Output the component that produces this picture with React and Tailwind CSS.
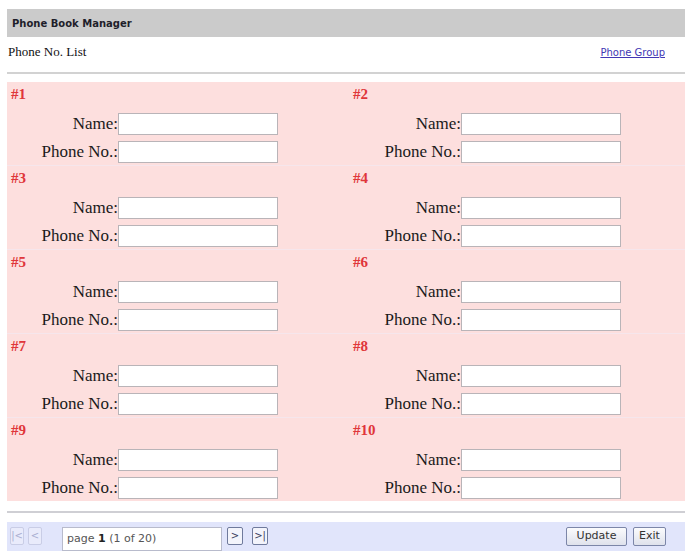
import React from "react";

const serif = { fontFamily: '"Liberation Serif", "Times New Roman", serif' };
const sans = { fontFamily: '"DejaVu Sans", Verdana, sans-serif' };

function Cell({ n, right }) {
  return (
    <div className={`h-[83px] bg-[#fddfde] ${right ? "pl-[3px]" : "pl-[4px]"} pt-[3px]`}>
      <div className="text-[15px] leading-[18px] font-bold text-[#e0363a]" style={serif}>
        #{n}
      </div>
      <div className="mt-[10px] flex items-center">
        <div className={`${right ? "w-[108px]" : "w-[107px]"} text-right text-[17px] leading-[18px] text-[#1a1a1a]`} style={serif}>
          Name:
        </div>
        <div className="w-[160px] h-[22px] border border-[#b9b4b8] bg-white" />
      </div>
      <div className="mt-[6px] flex items-center">
        <div className={`${right ? "w-[108px]" : "w-[107px]"} text-right text-[17px] leading-[18px] text-[#1a1a1a]`} style={serif}>
          Phone No.:
        </div>
        <div className="w-[160px] h-[22px] border border-[#b9b4b8] bg-white" />
      </div>
    </div>
  );
}

function NavBtn({ children, disabled, className = "" }) {
  return (
    <div
      className={`h-[18px] flex items-center justify-center text-[10px] leading-none border rounded-[2px] whitespace-nowrap ${
        disabled
          ? "border-[#c9cde6] text-[#a9afd2] bg-[#e9ebfb]"
          : "border-[#6f7a9c] text-[#3b4060] bg-[#f3f4fb]"
      } ${className}`}
      style={sans}
    >
      {children}
    </div>
  );
}

export default function App() {
  const nums = [1, 2, 3, 4, 5, 6, 7, 8, 9, 10];
  return (
    <div className="w-[692px] h-[551px] overflow-hidden bg-white pt-[9px] px-[7px]">
      <div className="h-[28px] bg-[#cbcbcb] flex items-center pl-[5px]">
        <span className="text-[10px] font-bold text-[#1e1e2a]" style={sans}>
          Phone Book Manager
        </span>
      </div>
      <div className="h-[30px] flex items-center justify-between pl-[1px] pr-[20px]">
        <span className="text-[13px] leading-[18px] text-[#111]" style={serif}>
          Phone No. List
        </span>
        <span className="text-[10px] text-[#4236b4] underline" style={sans}>
          Phone Group
        </span>
      </div>
      <div className="mt-[5px] h-[2px] bg-[#d2d2d2]" />
      <div className="mt-[8px] grid grid-cols-[343px_335px] gap-y-[1px] bg-[#f6e6ec]">
        {nums.map((n) => (
          <Cell key={n} n={n} right={n % 2 === 0} />
        ))}
      </div>
      <div className="mt-[10px] h-[2px] bg-[#cfcfd4]" />
      <div className="mt-[9px] h-[40px] bg-[#e1e5fb] flex items-start pt-[5px] pl-[3px]">
        <NavBtn disabled className="w-[14px]">|&lt;</NavBtn>
        <NavBtn disabled className="w-[14px] ml-[4px]">&lt;</NavBtn>
        <div
          className="ml-[20px] w-[160px] h-[24px] bg-white border border-[#b8bbcc] flex items-center pl-[4px] text-[11px] text-[#555]"
          style={sans}
        >
          page&nbsp;<span className="text-[#222] font-bold">1</span>&nbsp;(1 of 20)
        </div>
        <NavBtn className="w-[16px] ml-[5px]">&gt;</NavBtn>
        <NavBtn className="w-[16px] ml-[9px]">&gt;|</NavBtn>
        <div className="flex-1" />
        <div
          className="w-[61px] h-[19px] flex items-center justify-center border border-[#7c86a8] rounded-[2px] bg-gradient-to-b from-[#fbfbfd] to-[#dfe2ec] text-[11px] text-[#333]"
          style={sans}
        >
          Update
        </div>
        <div
          className="ml-[6px] mr-[19px] w-[33px] h-[19px] flex items-center justify-center border border-[#7c86a8] rounded-[2px] bg-gradient-to-b from-[#fbfbfd] to-[#dfe2ec] text-[11px] text-[#333]"
          style={sans}
        >
          Exit
        </div>
      </div>
    </div>
  );
}
